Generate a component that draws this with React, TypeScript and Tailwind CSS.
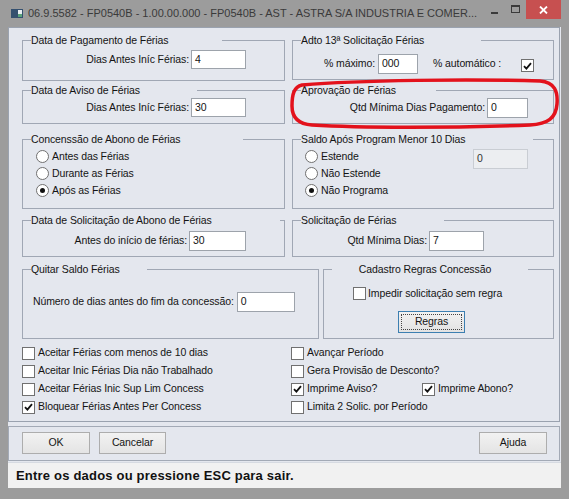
import type { ReactNode } from "react";

const ui = "font-['Liberation_Sans',Arial,sans-serif] text-[10.5px] tracking-[-0.1px] text-[#141414]";

function Group({
  title,
  legend,
  className,
  children,
}: {
  title: string;
  legend: string;
  className: string;
  children?: ReactNode;
}) {
  return (
    <div className={`relative border border-[#a0a7b4] ${className}`}>
      <span
        className={`absolute -top-[7px] left-[8px] h-[13px] whitespace-nowrap bg-[#e4e7ee] leading-[13px] ${legend}`}
      >
        {title}
      </span>
      {children}
    </div>
  );
}

function Check({ checked = false }: { checked?: boolean }) {
  return (
    <span className="flex h-[13px] w-[13px] shrink-0 items-center justify-center border border-[#707070] bg-white">
      {checked && (
        <svg width="9" height="8" viewBox="0 0 9 8">
          <path d="M1 4.2 3.4 6.6 8 1.2" fill="none" stroke="#111" strokeWidth="1.8" />
        </svg>
      )}
    </span>
  );
}

function Radio({ checked = false }: { checked?: boolean }) {
  return (
    <span className="flex h-[13px] w-[13px] shrink-0 items-center justify-center rounded-full border border-[#707070] bg-white">
      {checked && <span className="h-[5px] w-[5px] rounded-full bg-[#111]" />}
    </span>
  );
}

function Field({ value, className }: { value: string; className: string }) {
  return (
    <div className={`flex shrink-0 items-center border border-[#9da3ab] bg-white pl-[3px] ${className}`}>
      {value}
    </div>
  );
}

function Btn({ label, className }: { label: string; className: string }) {
  return (
    <div
      className={`flex h-[22px] items-center justify-center border border-[#adadad] bg-gradient-to-b from-[#f2f2f2] to-[#e4e4e4] ${className}`}
    >
      {label}
    </div>
  );
}

function CheckRow({ label, checked, className = "" }: { label: string; checked?: boolean; className?: string }) {
  return (
    <div className={`flex h-[18px] items-center gap-[3px] ${className}`}>
      <Check checked={checked} />
      <span>{label}</span>
    </div>
  );
}

function RadioRow({ label, checked }: { label: string; checked?: boolean }) {
  return (
    <div className="flex h-[17px] items-center gap-[3px]">
      <Radio checked={checked} />
      <span>{label}</span>
    </div>
  );
}

export default function App() {
  return (
    <div className={`relative flex h-[499px] w-[569px] flex-col bg-[#9c9c9c] ${ui}`}>
      {/* title bar */}
      <div className="flex h-[27px] items-center">
        <svg className="ml-[11px] shrink-0" width="12" height="9" viewBox="0 0 12 9">
          <rect width="12" height="9" fill="#34506f" />
          <rect x="7" y="1" width="4" height="7" fill="#e8eef2" />
          <rect x="7" y="5" width="4" height="3" fill="#5aa27a" />
        </svg>
        <span className="ml-[5px] whitespace-nowrap text-[11px] tracking-normal text-[#3a3a3a]">
          06.9.5582 - FP0540B - 1.00.00.000 - FP0540B - AST - ASTRA S/A INDUSTRIA E COMER...
        </span>
        <div className="ml-auto flex h-full items-start">
          <span className="mt-[12px] mr-[13px] h-[2px] w-[7px] bg-[#3a3a3a]" />
          <span className="mt-[5px] mr-[6px] h-[8px] w-[9px] border border-t-2 border-[#3a3a3a]" />
          <div className="mr-[8px] flex h-[19px] w-[35px] items-center justify-center bg-[#c75050]">
            <svg width="9" height="8" viewBox="0 0 9 8">
              <path d="M1 0.5 8 7.5M8 0.5 1 7.5" stroke="#fff" strokeWidth="1.8" />
            </svg>
          </div>
        </div>
      </div>

      <div className="ml-[8px] flex h-[461px] w-[553px] flex-col bg-[#e4e7ee]">
        {/* main form */}
        <div className="h-[396px] w-[552px] border border-[#9aa2af] pl-[13px] pt-[12px]">
          <div className="grid grid-cols-[263px_262px] gap-x-[7px]">
            <Group title="Data de Pagamento de Férias" legend="w-[191px]" className="h-[41px]">
              <div className="flex items-center justify-end gap-[2px] pr-[38px] pt-[9px]">
                <span>Dias Antes Iníc Férias:</span>
                <Field value="4" className="h-[19px] w-[55px]" />
              </div>
            </Group>
            <Group title="Adto 13ª Solicitação Férias" legend="w-[180px]" className="h-[40px]">
              <div className="flex items-center pl-[31px] pt-[13px]">
                <span>% máximo:</span>
                <Field value="000" className="ml-[3px] h-[20px] w-[40px]" />
                <span className="ml-[15px]">% automático :</span>
                <span className="ml-[20px] mt-[3px]">
                  <Check checked />
                </span>
              </div>
            </Group>
          </div>

          <div className="mt-[9px] grid grid-cols-[263px_262px] gap-x-[7px]">
            <Group title="Data de Aviso de Férias" legend="w-[166px]" className="h-[34px]">
              <div className="flex items-center justify-end gap-[2px] pr-[38px] pt-[7px]">
                <span>Dias Antes Iníc Férias:</span>
                <Field value="30" className="h-[19px] w-[55px]" />
              </div>
            </Group>
            <Group title="Aprovação de Férias" legend="w-[135px]" className="h-[34px]">
              <div className="flex items-center justify-end gap-[2px] pr-[25px] pt-[7px]">
                <span>Qtd Mínima Dias Pagamento:</span>
                <Field value="0" className="h-[20px] w-[41px]" />
              </div>
            </Group>
          </div>

          <div className="mt-[15px] grid grid-cols-[263px_262px] gap-x-[7px]">
            <Group title="Concenssão de Abono de Férias" legend="w-[212px]" className="h-[70px]">
              <div className="flex flex-col pl-[13px] pt-[8px]">
                <RadioRow label="Antes das Férias" />
                <RadioRow label="Durante as Férias" />
                <RadioRow label="Após as Férias" checked />
              </div>
            </Group>
            <Group title="Saldo Após Program Menor 10 Dias" legend="w-[232px]" className="h-[70px]">
              <div className="flex items-start pl-[12px] pr-[25px]">
                <div className="flex flex-col pt-[8px]">
                  <RadioRow label="Estende" />
                  <RadioRow label="Não Estende" />
                  <RadioRow label="Não Programa" checked />
                </div>
                <div className="ml-auto mt-[9px] flex h-[20px] w-[55px] items-center border border-[#c9cdd3] bg-[#eceef1] pl-[3px] text-[#333]">
                  0
                </div>
              </div>
            </Group>
          </div>

          <div className="mt-[11px] grid grid-cols-[263px_262px] gap-x-[7px]">
            <Group title="Data de Solicitação de Abono de Férias" legend="w-[249px]" className="h-[37px]">
              <div className="flex items-center justify-end gap-[2px] pr-[38px] pt-[10px]">
                <span>Antes do início de férias:</span>
                <Field value="30" className="h-[20px] w-[57px]" />
              </div>
            </Group>
            <Group title="Solicitação de Férias" legend="w-[143px]" className="h-[37px]">
              <div className="flex items-center justify-end gap-[2px] pr-[69px] pt-[10px]">
                <span>Qtd Mínima Dias:</span>
                <Field value="7" className="h-[20px] w-[55px]" />
              </div>
            </Group>
          </div>

          <div className="mt-[12px] grid grid-cols-[297px_231px] gap-x-[4px]">
            <Group title="Quitar Saldo Férias" legend="w-[116px]" className="h-[70px]">
              <div className="flex items-center gap-[3px] pl-[10px] pt-[22px]">
                <span>Número de dias antes do fim da concessão:</span>
                <Field value="0" className="h-[20px] w-[58px]" />
              </div>
            </Group>
            <Group title="Cadastro Regras Concessão" legend="w-[196px] pr-[10px] text-center" className="h-[70px]">
              <div className="flex flex-col items-start pt-[16px]">
                <div className="ml-[29px] flex items-center gap-[2px]">
                  <Check />
                  <span>Impedir solicitação sem regra</span>
                </div>
                <div className="ml-[74px] mt-[9px] flex h-[22px] w-[67px] items-center justify-center border border-[#3c7fb1] bg-gradient-to-b from-[#f2f2f2] to-[#e2e2e2] p-[2px]">
                  <span className="flex h-full w-full items-center justify-center border border-dotted border-[#444]">
                    Regras
                  </span>
                </div>
              </div>
            </Group>
          </div>

          {/* option checkboxes */}
          <div className="mt-[5px] grid grid-cols-[269px_1fr]">
            <div className="flex flex-col">
              <CheckRow label="Aceitar Férias com menos de 10 dias" />
              <CheckRow label="Aceitar Inic Férias Dia não Trabalhado" />
              <CheckRow label="Aceitar Férias Inic Sup Lim Concess" />
              <CheckRow label="Bloquear Férias Antes Per Concess" checked />
            </div>
            <div className="flex flex-col">
              <CheckRow label="Avançar Período" />
              <CheckRow label="Gera Provisão de Desconto?" />
              <div className="flex">
                <CheckRow label="Imprime Aviso?" checked className="w-[131px]" />
                <CheckRow label="Imprime Abono?" checked />
              </div>
              <CheckRow label="Limita 2 Solic. por Período" />
            </div>
          </div>
        </div>

        {/* buttons */}
        <div className="mt-[4px] flex h-[35px] w-[552px] items-start border border-[#a3aab6] pl-[13px] pt-[5px]">
          <Btn label="OK" className="w-[68px]" />
          <Btn label="Cancelar" className="ml-[9px] w-[67px]" />
          <Btn label="Ajuda" className="ml-auto mr-[12px] w-[68px]" />
        </div>

        {/* status line */}
        <div className="mt-[1px] flex h-[26px] items-center border-t border-[#d6dae1] bg-[#f1f1f1] pl-[8px] text-[13px] font-bold tracking-[0.2px] text-[#111]">
          Entre os dados ou pressione ESC para sair.
        </div>
      </div>

      {/* red highlight around the approval group */}
      <svg className="pointer-events-none absolute left-0 top-0" width="569" height="499" viewBox="0 0 569 499">
        <path
          d="M302 85 C360 80 470 79 540 81 C555 82 558 92 557 104 C556 118 548 124 530 125 C450 128 360 128 312 125 C297 124 292 116 292 106 C292 94 294 87 302 85 Z"
          fill="none"
          stroke="#e3121c"
          strokeWidth="3.5"
        />
      </svg>
    </div>
  );
}
